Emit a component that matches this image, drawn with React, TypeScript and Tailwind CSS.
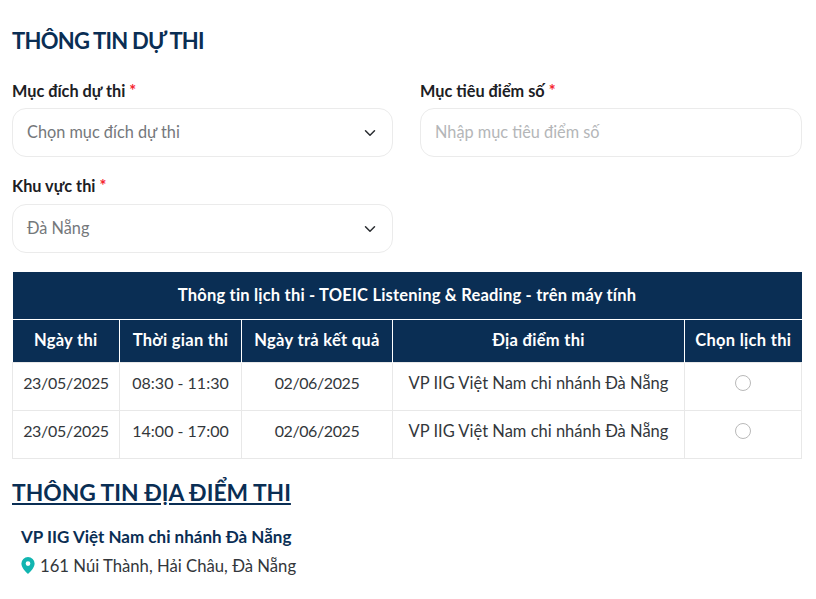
import { ChevronDown } from "lucide-react";

const rows = [
  { date: "23/05/2025", time: "08:30 - 11:30", result: "02/06/2025", place: "VP IIG Việt Nam chi nhánh Đà Nẵng" },
  { date: "23/05/2025", time: "14:00 - 17:00", result: "02/06/2025", place: "VP IIG Việt Nam chi nhánh Đà Nẵng" },
];

function Label({ text, className = "" }: { text: string; className?: string }) {
  return (
    <label className={`block h-[24px] text-[16.3px] leading-[24px] font-bold text-[#1c2024] ${className}`}>
      {text} <span className="text-[#f5222d]">*</span>
    </label>
  );
}

function SelectBox({ text }: { text: string }) {
  return (
    <div className="mt-[5px] flex h-[49px] items-center justify-between rounded-[14px] border border-[#ebebeb] bg-white pl-[14px] pr-[13px] text-[16.3px] text-[#75787b]">
      <span className="pb-[1px]">{text}</span>
      <ChevronDown className="h-[18px] w-[18px] text-[#2a2d31]" strokeWidth={2} />
    </div>
  );
}

export default function App() {
  return (
    <div className="h-[599px] w-[816px] overflow-hidden bg-white px-[12px] font-['Lato','Noto_Sans',sans-serif]">
      <h2 className="pt-[27px] text-[22px] leading-[28px] font-bold tracking-[-0.75px] text-[#0a2e54]">THÔNG TIN DỰ THI</h2>

      <div className="mt-[24px] grid w-[790px] grid-cols-[381px_382px] gap-x-[27px]">
        <div>
          <Label text="Mục đích dự thi" />
          <SelectBox text="Chọn mục đích dự thi" />
        </div>
        <div>
          <Label text="Mục tiêu điểm số" />
          <div className="mt-[5px] flex h-[49px] items-center rounded-[14px] border border-[#ebebeb] pb-[1px] pl-[14px] text-[16.3px] text-[#b4b6b8]">
            Nhập mục tiêu điểm số
          </div>
        </div>
        <div className="mt-[18px]">
          <Label text="Khu vực thi" className="-mt-px mb-[6px]" />
          <SelectBox text="Đà Nẵng" />
        </div>
      </div>

      <table className="mt-[19px] w-[789px] table-fixed border-collapse text-center text-[16px]">
        <colgroup>
          <col className="w-[107px]" />
          <col className="w-[122px]" />
          <col className="w-[151px]" />
          <col className="w-[292px]" />
          <col className="w-[117px]" />
        </colgroup>
        <thead className="bg-[#0a2e54] font-bold text-white">
          <tr>
            <th colSpan={5} className="h-[47px] border-b border-white p-0 text-[16.5px] tracking-[0.2px]">
              Thông tin lịch thi - TOEIC Listening &amp; Reading - trên máy tính
            </th>
          </tr>
          <tr>
            {["Ngày thi", "Thời gian thi", "Ngày trả kết quả", "Địa điểm thi", "Chọn lịch thi"].map((h, i) => (
              <th key={h} className={`h-[43px] p-0 text-[16.5px] tracking-[0.3px] ${i < 4 ? "border-r border-white" : ""}`}>
                {h}
              </th>
            ))}
          </tr>
        </thead>
        <tbody className="text-[#33373b]">
          {rows.map((r) => (
            <tr key={r.time} className="h-[48px]">
              <td className="border border-[#e8e8e8] p-0 pb-[6px] tracking-[-0.3px]">{r.date}</td>
              <td className="border border-[#e8e8e8] p-0 pb-[6px]">{r.time}</td>
              <td className="border border-[#e8e8e8] p-0 pb-[6px] tracking-[-0.4px]">{r.result}</td>
              <td className="border border-[#e8e8e8] p-0 pb-[6px] text-[16.5px]">{r.place}</td>
              <td className="border border-[#e8e8e8] p-0 pb-[6px]">
                <span className="mx-auto block h-[16px] w-[16px] rounded-full border border-[#b9b9b9]" />
              </td>
            </tr>
          ))}
        </tbody>
      </table>

      <h2 className="mt-[19px] text-[22.8px] leading-[28px] font-bold text-[#0a2e54] underline">THÔNG TIN ĐỊA ĐIỂM THI</h2>

      <div className="mt-[19px] pl-[9px]">
        <p className="text-[17px] leading-[24px] font-bold text-[#0a2e54]">VP IIG Việt Nam chi nhánh Đà Nẵng</p>
        <p className="mt-[5px] flex items-center gap-[5px] text-[16.7px] leading-[24px] text-[#33373b]">
          <svg viewBox="0 0 14 18" className="h-[17px] w-[14px]">
            <path fillRule="evenodd" fill="#12b5b0" d="M7 0a7 7 0 0 1 7 7c0 4.2-4.4 8.8-7 11C4.4 15.8 0 11.2 0 7a7 7 0 0 1 7-7Zm0 4.5a2.5 2.5 0 1 0 0 5 2.5 2.5 0 0 0 0-5Z" />
          </svg>
          161 Núi Thành, Hải Châu, Đà Nẵng
        </p>
      </div>
    </div>
  );
}
